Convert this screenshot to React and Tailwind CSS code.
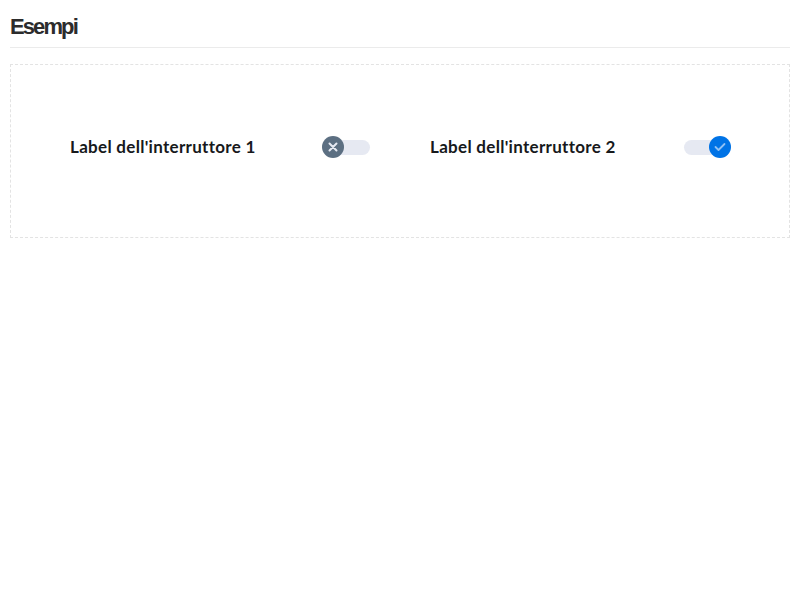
export default function App() {
  return (
    <div className="w-[800px] h-[600px] bg-white px-[10px] pt-[12px]">
      <h2 className="text-[22px] leading-[30px] font-bold tracking-[-1.9px] text-[#2c2c2c] pb-[5px] border-b border-[#ebebeb]" style={{ fontFamily: '"Liberation Sans", Arial, sans-serif' }}>
        Esempi
      </h2>
      <div className="mt-[16px] border border-dashed border-[#e3e3e3] h-[174px] flex items-center pl-[59px] pb-[8px]">
        <div className="flex items-center gap-[60px]">
          <div className="w-[300px] flex items-center justify-between">
            <span className="text-[17px] font-bold tracking-[0.3px] text-[#17191c]" style={{ fontFamily: 'Lato, "Open Sans", sans-serif' }}>
              Label dell'interruttore 1
            </span>
            <div className="relative w-[48px] h-[22px]">
              <div className="absolute left-[12px] top-[4px] w-[36px] h-[15px] rounded-full bg-[#e6e9f2]" />
              <div className="absolute left-0 top-0 w-[22px] h-[22px] rounded-full bg-[#5c6f82] flex items-center justify-center">
                <svg width="10" height="10" viewBox="0 0 10 10">
                  <path d="M1.5 1.5 L8.5 8.5 M8.5 1.5 L1.5 8.5" stroke="#e6e9f2" strokeWidth="2" strokeLinecap="round" />
                </svg>
              </div>
            </div>
          </div>
          <div className="w-[301px] flex items-center justify-between">
            <span className="text-[17px] font-bold tracking-[0.3px] text-[#17191c]" style={{ fontFamily: 'Lato, "Open Sans", sans-serif' }}>
              Label dell'interruttore 2
            </span>
            <div className="relative w-[47px] h-[22px]">
              <div className="absolute left-0 top-[4px] w-[36px] h-[15px] rounded-full bg-[#e6e9f2]" />
              <div className="absolute right-0 top-0 w-[22px] h-[22px] rounded-full bg-[#0073e6] flex items-center justify-center">
                <svg width="12" height="10" viewBox="0 0 12 10">
                  <path d="M1.5 5 L4.5 8 L10.5 2" stroke="#8fc1f5" strokeWidth="1.8" fill="none" strokeLinecap="round" strokeLinejoin="round" />
                </svg>
              </div>
            </div>
          </div>
        </div>
      </div>
    </div>
  );
}
